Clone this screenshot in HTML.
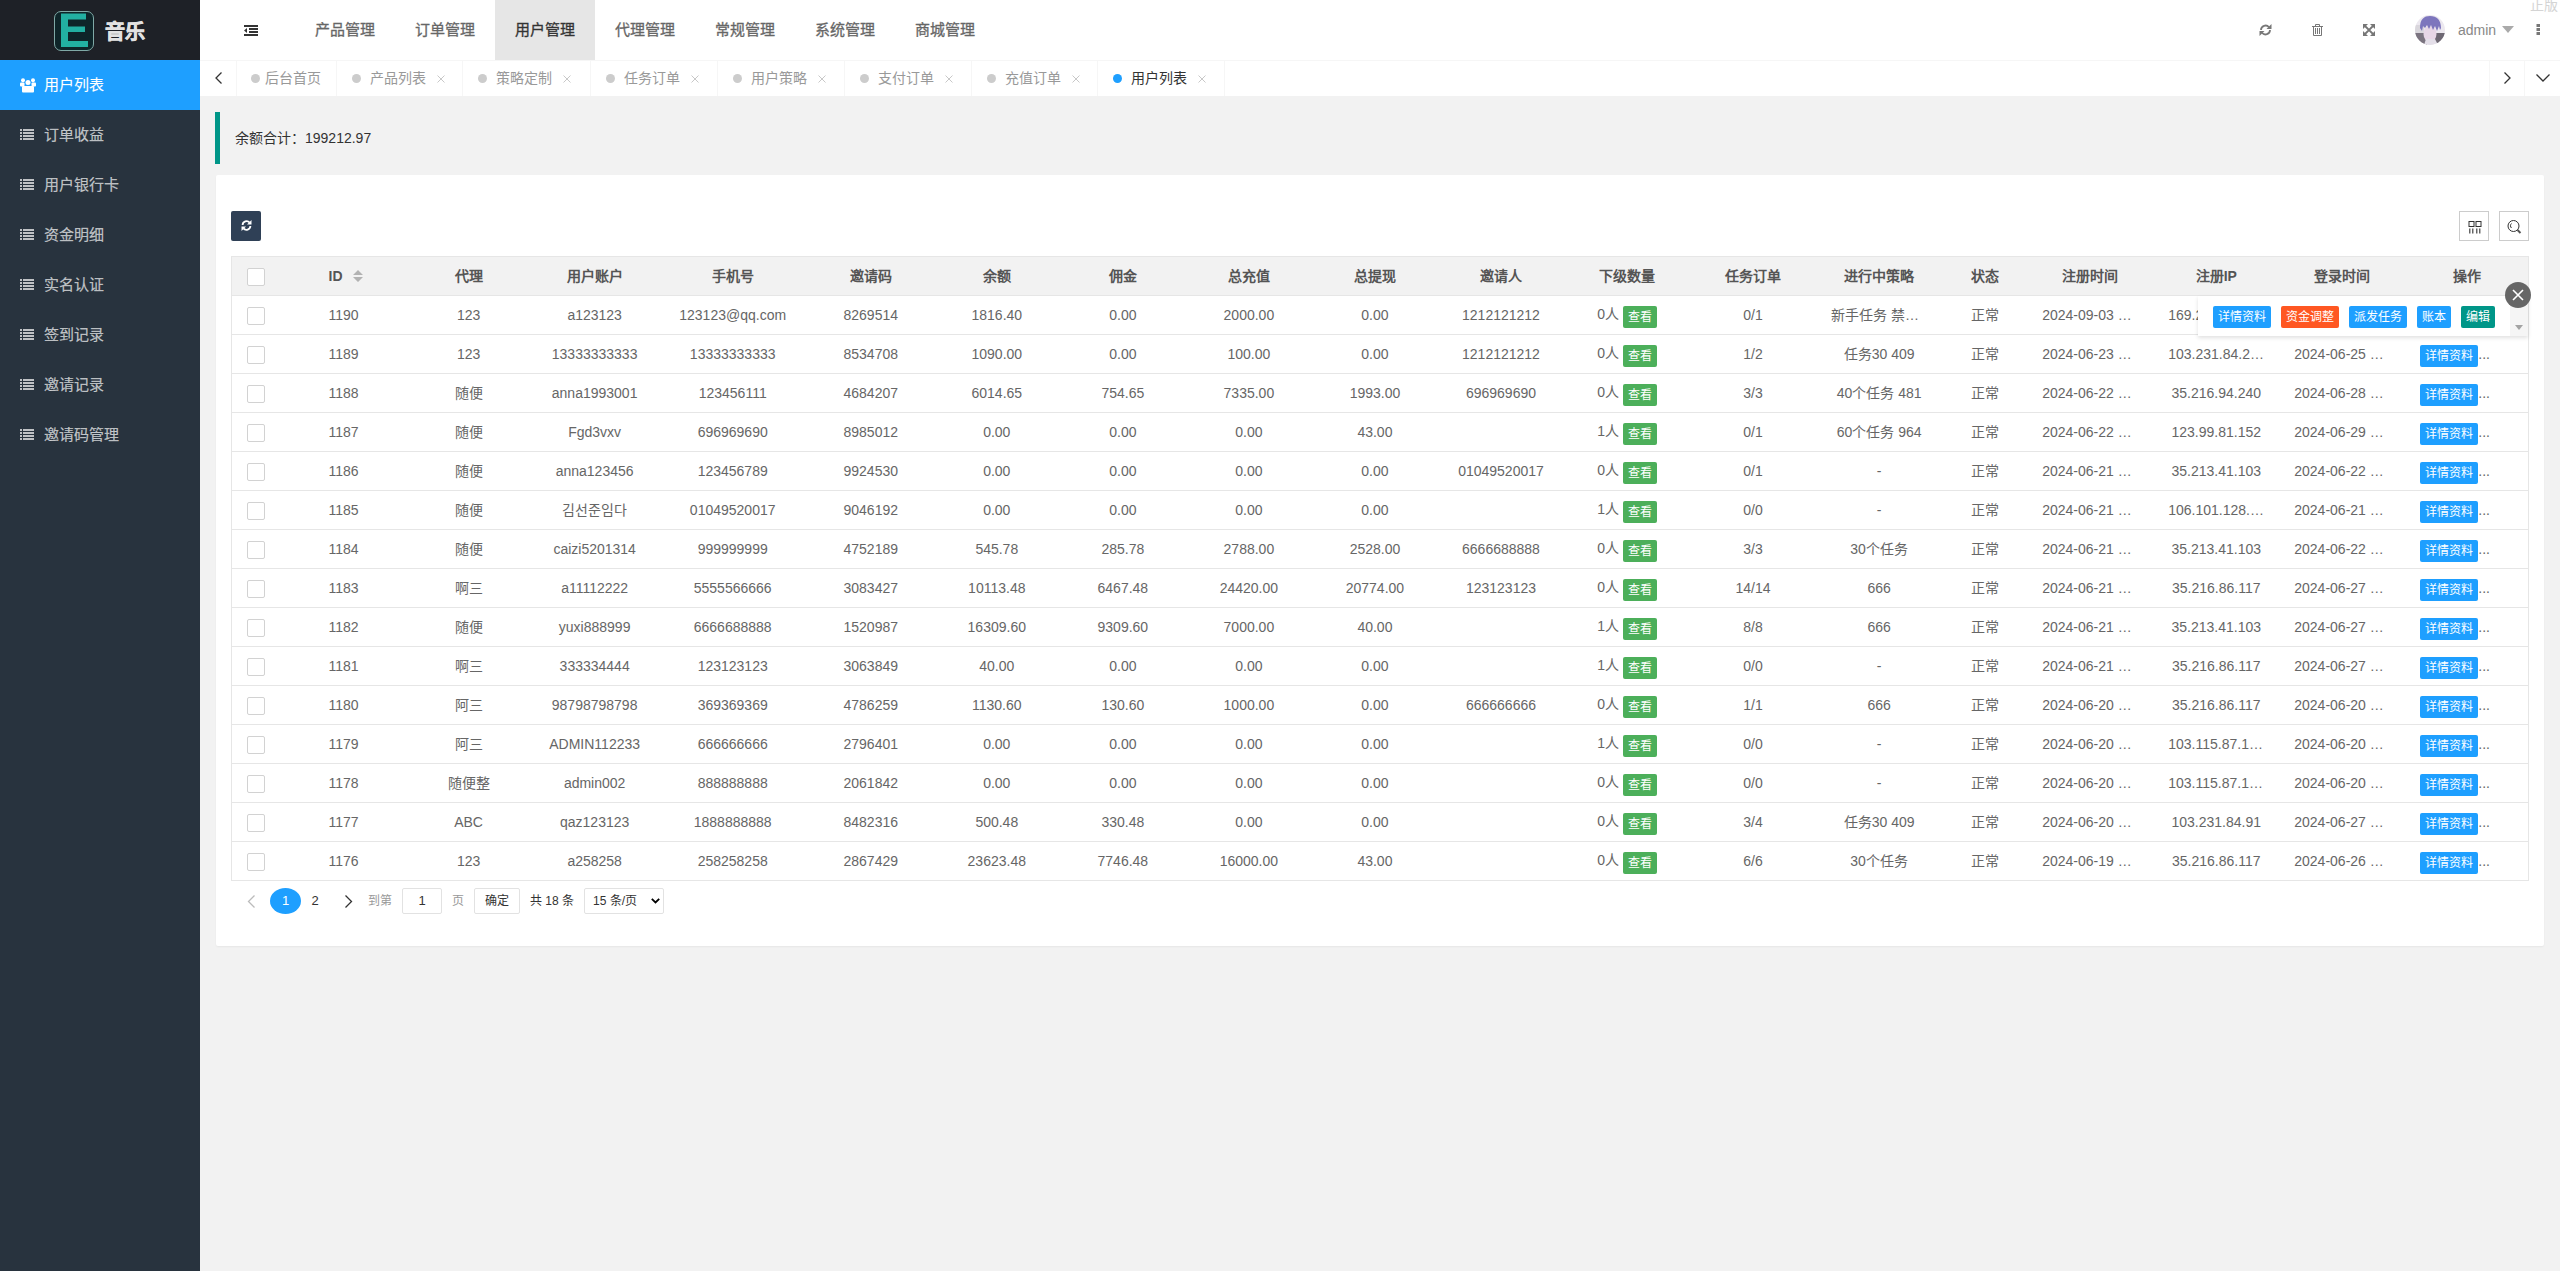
<!DOCTYPE html><html lang="zh-CN"><head><meta charset="utf-8"><title>用户列表</title><style>
*{box-sizing:border-box;margin:0;padding:0}
html,body{width:2560px;height:1271px;overflow:hidden;background:#f2f2f2;font-family:"Liberation Sans",sans-serif;font-size:14px;color:#666}
.abs{position:absolute}
#side{position:absolute;left:0;top:0;width:200px;height:1271px;background:#28333e}
#logo{position:absolute;left:0;top:0;width:200px;height:60px;background:#1e2127}
#logo .box{position:absolute;left:54px;top:11px;width:40px;height:40px;border:1px solid #7fa9a6;border-radius:7px;background:#0e2529}
#logo .t{position:absolute;left:105px;top:19px;font-size:20px;font-weight:bold;color:#e2e2e2;line-height:26px;letter-spacing:0px;-webkit-text-stroke:0.6px #e2e2e2}
.si{position:absolute;left:0;width:200px;height:50px;color:rgba(255,255,255,.7);font-size:15px;line-height:50px}
.si .tx{-webkit-text-stroke:0.2px rgba(255,255,255,.5)}
.si .tx{position:absolute;left:44px;top:0}
.si.on{background:#1e9fff;color:#fff}
.si svg{position:absolute;left:20px;top:19px}
.si.on svg{top:18px}
#hdr{position:absolute;left:200px;top:0;width:2360px;height:61px;background:#fff;border-bottom:1px solid #f6f6f6}
.nav{position:absolute;top:0;width:100px;height:60px;line-height:60px;text-align:center;font-size:15px;color:#666;-webkit-text-stroke:0.3px #666}
.nav.on{-webkit-text-stroke:0.3px #333}
.nav.on{background:#e6e6e6;color:#333}
#tabs{position:absolute;left:200px;top:61px;width:2360px;height:35px;background:#fff}
.tab{position:absolute;top:0;height:35px;border-right:1px solid #f6f6f6;line-height:35px;color:#999;font-size:14px;white-space:nowrap}
.tab .dot{position:absolute;top:13px;width:9px;height:9px;border-radius:50%;background:#ccc}
.tab .tx{position:absolute;top:0}
.tab .x{position:absolute;top:14px;width:8px;height:8px}
.tab.on{color:#333}
.tab.on .dot{background:#1e9fff}
#quote{position:absolute;left:215px;top:112px;width:2330px;height:52px;border-left:5px solid #009688;line-height:52px;padding-left:15px;color:#333;font-size:14px}
#card{position:absolute;left:216px;top:175px;width:2328px;height:771px;background:#fff;border-radius:2px;box-shadow:0 1px 2px 0 rgba(0,0,0,.05)}
#rbtn{position:absolute;left:231px;top:211px;width:30px;height:30px;background:#2f4056;border-radius:2px}
.tool{position:absolute;top:211px;width:30px;height:30px;border:1px solid #ccc;background:#fff}
table.t{position:absolute;left:231px;top:256px;border-collapse:collapse;table-layout:fixed;width:2298px}
table.t td,table.t th{border:1px solid #e6e6e6;border-left:none;border-right:none;height:39px;padding:0 15px;line-height:20px;text-align:center;font-size:14px;white-space:nowrap;overflow:hidden;text-overflow:ellipsis;font-weight:normal}
table.t tr:first-child th{background:#f2f2f2;color:#555;font-weight:bold}
table.t{border-left:1px solid #e6e6e6;border-right:1px solid #e6e6e6}
.cb{display:inline-block;width:18px;height:18px;border:1px solid #d2d2d2;border-radius:2px;background:#fff;vertical-align:middle;position:relative;left:-1px}
.bx{display:inline-block;height:22px;line-height:22px;padding:0 5px;font-size:12px;color:#fff;border-radius:2px;vertical-align:middle}
table.t .bx{vertical-align:top;position:relative;top:2px}
.g{background:#4caf5a}
.b{background:#1e9fff}
.o{background:#ff5722}
.c{background:#009688}
</style></head><body>
<div id="side">
<div id="logo"><div class="box"></div><svg class="abs" style="left:60px;top:13px" width="28" height="35" viewBox="0 0 28 35"><path d="M1 0.5H26V6.5H8V13.5H25V19H8V28H28V34H1Z" fill="#22b0a2"/></svg><div class="t">音乐</div></div>
<div class="si on" style="top:60px"><svg width="16" height="15" viewBox="0 0 16 15"><circle cx="3" cy="2.2" r="2" fill="#fff"/><circle cx="13" cy="2.2" r="2" fill="#fff"/><circle cx="8" cy="4.5" r="2.5" fill="#fff"/><rect x="0" y="4.5" width="4.5" height="4" rx="1" fill="#fff"/><rect x="11.5" y="4.5" width="4.5" height="4" rx="1" fill="#fff"/><rect x="2" y="8" width="12" height="6.5" rx="1" fill="#fff"/></svg><span class="tx">用户列表</span></div>
<div class="si" style="top:110px"><svg width="15" height="12" viewBox="0 0 15 12"><g fill="currentColor"><rect x="0" y="0" width="2" height="2"/><rect x="3" y="0" width="11" height="2"/><rect x="0" y="3" width="2" height="2"/><rect x="3" y="3" width="11" height="2"/><rect x="0" y="6" width="2" height="2"/><rect x="3" y="6" width="11" height="2"/><rect x="0" y="9" width="2" height="2"/><rect x="3" y="9" width="11" height="2"/></g></svg><span class="tx">订单收益</span></div>
<div class="si" style="top:160px"><svg width="15" height="12" viewBox="0 0 15 12"><g fill="currentColor"><rect x="0" y="0" width="2" height="2"/><rect x="3" y="0" width="11" height="2"/><rect x="0" y="3" width="2" height="2"/><rect x="3" y="3" width="11" height="2"/><rect x="0" y="6" width="2" height="2"/><rect x="3" y="6" width="11" height="2"/><rect x="0" y="9" width="2" height="2"/><rect x="3" y="9" width="11" height="2"/></g></svg><span class="tx">用户银行卡</span></div>
<div class="si" style="top:210px"><svg width="15" height="12" viewBox="0 0 15 12"><g fill="currentColor"><rect x="0" y="0" width="2" height="2"/><rect x="3" y="0" width="11" height="2"/><rect x="0" y="3" width="2" height="2"/><rect x="3" y="3" width="11" height="2"/><rect x="0" y="6" width="2" height="2"/><rect x="3" y="6" width="11" height="2"/><rect x="0" y="9" width="2" height="2"/><rect x="3" y="9" width="11" height="2"/></g></svg><span class="tx">资金明细</span></div>
<div class="si" style="top:260px"><svg width="15" height="12" viewBox="0 0 15 12"><g fill="currentColor"><rect x="0" y="0" width="2" height="2"/><rect x="3" y="0" width="11" height="2"/><rect x="0" y="3" width="2" height="2"/><rect x="3" y="3" width="11" height="2"/><rect x="0" y="6" width="2" height="2"/><rect x="3" y="6" width="11" height="2"/><rect x="0" y="9" width="2" height="2"/><rect x="3" y="9" width="11" height="2"/></g></svg><span class="tx">实名认证</span></div>
<div class="si" style="top:310px"><svg width="15" height="12" viewBox="0 0 15 12"><g fill="currentColor"><rect x="0" y="0" width="2" height="2"/><rect x="3" y="0" width="11" height="2"/><rect x="0" y="3" width="2" height="2"/><rect x="3" y="3" width="11" height="2"/><rect x="0" y="6" width="2" height="2"/><rect x="3" y="6" width="11" height="2"/><rect x="0" y="9" width="2" height="2"/><rect x="3" y="9" width="11" height="2"/></g></svg><span class="tx">签到记录</span></div>
<div class="si" style="top:360px"><svg width="15" height="12" viewBox="0 0 15 12"><g fill="currentColor"><rect x="0" y="0" width="2" height="2"/><rect x="3" y="0" width="11" height="2"/><rect x="0" y="3" width="2" height="2"/><rect x="3" y="3" width="11" height="2"/><rect x="0" y="6" width="2" height="2"/><rect x="3" y="6" width="11" height="2"/><rect x="0" y="9" width="2" height="2"/><rect x="3" y="9" width="11" height="2"/></g></svg><span class="tx">邀请记录</span></div>
<div class="si" style="top:410px"><svg width="15" height="12" viewBox="0 0 15 12"><g fill="currentColor"><rect x="0" y="0" width="2" height="2"/><rect x="3" y="0" width="11" height="2"/><rect x="0" y="3" width="2" height="2"/><rect x="3" y="3" width="11" height="2"/><rect x="0" y="6" width="2" height="2"/><rect x="3" y="6" width="11" height="2"/><rect x="0" y="9" width="2" height="2"/><rect x="3" y="9" width="11" height="2"/></g></svg><span class="tx">邀请码管理</span></div>
</div>
<div id="hdr">
<svg class="abs" style="left:44px;top:25px" width="14" height="11" viewBox="0 0 14 11"><g fill="#333"><rect x="0" y="0" width="14" height="2"/><rect x="5" y="3" width="9" height="2"/><rect x="5" y="6" width="9" height="2"/><rect x="0" y="9" width="14" height="2"/><path d="M0 5.5L3 3V8Z"/></g></svg>
<div class="nav" style="left:95px">产品管理</div>
<div class="nav" style="left:195px">订单管理</div>
<div class="nav on" style="left:295px">用户管理</div>
<div class="nav" style="left:395px">代理管理</div>
<div class="nav" style="left:495px">常规管理</div>
<div class="nav" style="left:595px">系统管理</div>
<div class="nav" style="left:695px">商城管理</div>
<svg class="abs" style="left:2059px;top:24px" width="13" height="12" viewBox="0 0 13 12"><g fill="none" stroke="#777" stroke-width="1.8"><path d="M2 6A4.5 4.5 0 0 1 10 3.2"/><path d="M11 6A4.5 4.5 0 0 1 3 8.8"/></g><path d="M12.5 0V5H7.5Z" fill="#777"/><path d="M0.5 12V7H5.5Z" fill="#777"/></svg>
<svg class="abs" style="left:2112px;top:24px" width="11" height="12" viewBox="0 0 11 12"><g fill="none" stroke="#777" stroke-width="1"><path d="M0 2.5H11"/><path d="M3.5 2.5V0.5H7.5V2.5"/><path d="M1.5 2.5V11.5H9.5V2.5"/><path d="M3.5 4V10M5.5 4V10M7.5 4V10"/></g></svg>
<svg class="abs" style="left:2163px;top:24px" width="12" height="12" viewBox="0 0 12 12"><g fill="#777"><path d="M0 0H5L0 5Z"/><path d="M12 0H7L12 5Z"/><path d="M0 12H5L0 7Z"/><path d="M12 12H7L12 7Z"/></g><g stroke="#777" stroke-width="1.8"><path d="M1.5 1.5L10.5 10.5M10.5 1.5L1.5 10.5"/></g></svg>
<svg class="abs" style="left:2215px;top:15px" width="30" height="30" viewBox="0 0 30 30"><defs><clipPath id="av"><circle cx="15" cy="15" r="15"/></clipPath></defs><g clip-path="url(#av)"><rect width="30" height="30" fill="#ece8ef"/><rect x="0" y="10" width="9" height="8" fill="#d9d6dc"/><path d="M0 18H11L12 30H0Z" fill="#7b7480"/><path d="M19 18H30V30H26L25 28H19Z" fill="#6e6873"/><ellipse cx="15" cy="19" rx="6.5" ry="8" fill="#e7d6e6"/><path d="M5 13C5 4 9 1 15 1C22 1 26 5 26 13L25 15L24 11L22 16L20 11L18 15L16 10L14 14L12 10L10 13L8 11L7 16Z" fill="#7d76bd"/><path d="M9 30L11 24H20L23 30Z" fill="#e4dfe9"/></g></svg>
<div class="abs" style="left:2258px;top:0;height:60px;line-height:60px;font-size:14px;color:#888">admin</div>
<svg class="abs" style="left:2302px;top:26px" width="12" height="7" viewBox="0 0 12 7"><path d="M0 0H12L6 7Z" fill="#aaa"/></svg>
<svg class="abs" style="left:2336px;top:24px" width="5" height="11" viewBox="0 0 5 11"><g fill="#777"><rect x="0.5" y="0" width="3.5" height="3"/><rect x="0.5" y="4" width="3.5" height="3"/><rect x="0.5" y="8" width="3.5" height="3"/></g></svg>
<div class="abs" style="left:2330px;top:-4px;font-size:14px;color:#d4d4d4;line-height:18px">正版</div>
</div>
<div id="tabs">
<div class="tab" style="left:0;width:37px"><svg class="abs" style="left:15px;top:11px" width="7" height="12" viewBox="0 0 7 12"><path d="M6.5 0.5L1 6L6.5 11.5" fill="none" stroke="#333" stroke-width="1.3"/></svg></div>
<div class="tab" style="left:37px;width:100px"><span class="dot" style="left:14px"></span><span class="tx" style="left:28px">后台首页</span></div>
<div class="tab" style="left:137px;width:126px"><span class="dot" style="left:15px"></span><span class="tx" style="left:33px">产品列表</span><svg class="x" style="left:100px" viewBox="0 0 8 8"><path d="M0.5 0.5L7.5 7.5M7.5 0.5L0.5 7.5" stroke="#c8c8c8" stroke-width="1"/></svg></div>
<div class="tab" style="left:263px;width:128px"><span class="dot" style="left:15px"></span><span class="tx" style="left:33px">策略定制</span><svg class="x" style="left:100px" viewBox="0 0 8 8"><path d="M0.5 0.5L7.5 7.5M7.5 0.5L0.5 7.5" stroke="#c8c8c8" stroke-width="1"/></svg></div>
<div class="tab" style="left:391px;width:127px"><span class="dot" style="left:15px"></span><span class="tx" style="left:33px">任务订单</span><svg class="x" style="left:100px" viewBox="0 0 8 8"><path d="M0.5 0.5L7.5 7.5M7.5 0.5L0.5 7.5" stroke="#c8c8c8" stroke-width="1"/></svg></div>
<div class="tab" style="left:518px;width:127px"><span class="dot" style="left:15px"></span><span class="tx" style="left:33px">用户策略</span><svg class="x" style="left:100px" viewBox="0 0 8 8"><path d="M0.5 0.5L7.5 7.5M7.5 0.5L0.5 7.5" stroke="#c8c8c8" stroke-width="1"/></svg></div>
<div class="tab" style="left:645px;width:127px"><span class="dot" style="left:15px"></span><span class="tx" style="left:33px">支付订单</span><svg class="x" style="left:100px" viewBox="0 0 8 8"><path d="M0.5 0.5L7.5 7.5M7.5 0.5L0.5 7.5" stroke="#c8c8c8" stroke-width="1"/></svg></div>
<div class="tab" style="left:772px;width:126px"><span class="dot" style="left:15px"></span><span class="tx" style="left:33px">充值订单</span><svg class="x" style="left:100px" viewBox="0 0 8 8"><path d="M0.5 0.5L7.5 7.5M7.5 0.5L0.5 7.5" stroke="#c8c8c8" stroke-width="1"/></svg></div>
<div class="tab on" style="left:898px;width:127px"><span class="dot" style="left:15px"></span><span class="tx" style="left:33px">用户列表</span><svg class="x" style="left:100px" viewBox="0 0 8 8"><path d="M0.5 0.5L7.5 7.5M7.5 0.5L0.5 7.5" stroke="#c8c8c8" stroke-width="1"/></svg></div>
<div class="abs" style="left:2289px;top:0;width:36px;height:35px;border-left:1px solid #f6f6f6"><svg class="abs" style="left:14px;top:11px" width="7" height="12" viewBox="0 0 7 12"><path d="M0.5 0.5L6 6L0.5 11.5" fill="none" stroke="#333" stroke-width="1.3"/></svg></div>
<div class="abs" style="left:2324px;top:0;width:36px;height:35px;border-left:1px solid #f6f6f6"><svg class="abs" style="left:11px;top:13px" width="14" height="8" viewBox="0 0 14 8"><path d="M0.5 0.5L7 7L13.5 0.5" fill="none" stroke="#333" stroke-width="1.3"/></svg></div>
</div>
<div id="quote">余额合计：199212.97</div>
<div id="card"></div>
<div id="rbtn"><svg class="abs" style="left:10px;top:9px" width="11" height="11" viewBox="0 0 11 11"><g fill="none" stroke="#fff" stroke-width="1.8"><path d="M1.6 5A4 4 0 0 1 8.6 2.6"/><path d="M9.4 6A4 4 0 0 1 2.4 8.4"/></g><path d="M10.5 0V4.5H6Z" fill="#fff"/><path d="M0.5 11V6.5H5Z" fill="#fff"/></svg></div>
<div class="tool" style="left:2459px"><svg class="abs" style="left:8px;top:8px" width="14" height="14" viewBox="0 0 14 14"><g fill="none" stroke="#333" stroke-width="1"><rect x="1" y="1.5" width="5" height="5"/><rect x="8" y="1.5" width="5" height="5"/><path d="M1.8 8.5V13.5M4.8 8.5V13.5M8.8 8.5V13.5M11.8 8.5V13.5" stroke-width="1.1"/></g></svg></div>
<div class="tool" style="left:2499px"><svg class="abs" style="left:7px;top:7px" width="16" height="16" viewBox="0 0 16 16"><g fill="none" stroke="#333" stroke-width="1"><circle cx="6.5" cy="7" r="5.5"/><path d="M4.5 4.5A3 3 0 0 0 4.5 9" /></g><path d="M10.5 11L13.5 14" stroke="#555" stroke-width="2"/></svg></div>
<table class="t"><colgroup><col style="width:50px"><col style="width:124px"><col style="width:126px"><col style="width:126px"><col style="width:150px"><col style="width:126px"><col style="width:126px"><col style="width:126px"><col style="width:126px"><col style="width:126px"><col style="width:126px"><col style="width:126px"><col style="width:126px"><col style="width:126px"><col style="width:85px"><col style="width:126px"><col style="width:126px"><col style="width:126px"><col style="width:123px"></colgroup><tr><th><span class="cb"></span></th><th><span style="position:relative;left:2px">ID<svg style="display:inline-block;vertical-align:middle;margin-left:10px;margin-top:-2px" width="10" height="12" viewBox="0 0 10 12"><path d="M0 5L5 0L10 5Z M0 7L5 12L10 7Z" fill="#b2b2b2"/></svg></span></th><th>代理</th><th>用户账户</th><th>手机号</th><th>邀请码</th><th>余额</th><th>佣金</th><th>总充值</th><th>总提现</th><th>邀请人</th><th>下级数量</th><th>任务订单</th><th>进行中策略</th><th>状态</th><th>注册时间</th><th>注册IP</th><th>登录时间</th><th>操作</th></tr><tr><td><span class="cb"></span></td><td>1190</td><td>123</td><td>a123123</td><td>123123@qq.com</td><td>8269514</td><td>1816.40</td><td>0.00</td><td>2000.00</td><td>0.00</td><td>1212121212</td><td>0人<span class="bx g" style="margin-left:4px">查看</span></td><td>0/1</td><td>新手任务 禁用提现</td><td>正常</td><td>2024-09-03 12:30:15</td><td>169.254.10.123</td><td>2024-09-03 12:30:15</td><td style="text-align:left;padding-left:15px"><span class="bx b">详情资料</span><span style="position:relative;top:1px">...</span></td></tr><tr><td><span class="cb"></span></td><td>1189</td><td>123</td><td>13333333333</td><td>13333333333</td><td>8534708</td><td>1090.00</td><td>0.00</td><td>100.00</td><td>0.00</td><td>1212121212</td><td>0人<span class="bx g" style="margin-left:4px">查看</span></td><td>1/2</td><td>任务30 409</td><td>正常</td><td>2024-06-23 10:25:36</td><td>103.231.84.211</td><td>2024-06-25 10:25:36</td><td style="text-align:left;padding-left:15px"><span class="bx b">详情资料</span><span style="position:relative;top:1px">...</span></td></tr><tr><td><span class="cb"></span></td><td>1188</td><td>随便</td><td>anna1993001</td><td>123456111</td><td>4684207</td><td>6014.65</td><td>754.65</td><td>7335.00</td><td>1993.00</td><td>696969690</td><td>0人<span class="bx g" style="margin-left:4px">查看</span></td><td>3/3</td><td>40个任务 481</td><td>正常</td><td>2024-06-22 10:25:36</td><td>35.216.94.240</td><td>2024-06-28 10:25:36</td><td style="text-align:left;padding-left:15px"><span class="bx b">详情资料</span><span style="position:relative;top:1px">...</span></td></tr><tr><td><span class="cb"></span></td><td>1187</td><td>随便</td><td>Fgd3vxv</td><td>696969690</td><td>8985012</td><td>0.00</td><td>0.00</td><td>0.00</td><td>43.00</td><td></td><td>1人<span class="bx g" style="margin-left:4px">查看</span></td><td>0/1</td><td>60个任务 964</td><td>正常</td><td>2024-06-22 10:25:36</td><td>123.99.81.152</td><td>2024-06-29 10:25:36</td><td style="text-align:left;padding-left:15px"><span class="bx b">详情资料</span><span style="position:relative;top:1px">...</span></td></tr><tr><td><span class="cb"></span></td><td>1186</td><td>随便</td><td>anna123456</td><td>123456789</td><td>9924530</td><td>0.00</td><td>0.00</td><td>0.00</td><td>0.00</td><td>01049520017</td><td>0人<span class="bx g" style="margin-left:4px">查看</span></td><td>0/1</td><td>-</td><td>正常</td><td>2024-06-21 10:25:36</td><td>35.213.41.103</td><td>2024-06-22 10:25:36</td><td style="text-align:left;padding-left:15px"><span class="bx b">详情资料</span><span style="position:relative;top:1px">...</span></td></tr><tr><td><span class="cb"></span></td><td>1185</td><td>随便</td><td>김선준임다</td><td>01049520017</td><td>9046192</td><td>0.00</td><td>0.00</td><td>0.00</td><td>0.00</td><td></td><td>1人<span class="bx g" style="margin-left:4px">查看</span></td><td>0/0</td><td>-</td><td>正常</td><td>2024-06-21 10:25:36</td><td>106.101.128.155</td><td>2024-06-21 10:25:36</td><td style="text-align:left;padding-left:15px"><span class="bx b">详情资料</span><span style="position:relative;top:1px">...</span></td></tr><tr><td><span class="cb"></span></td><td>1184</td><td>随便</td><td>caizi5201314</td><td>999999999</td><td>4752189</td><td>545.78</td><td>285.78</td><td>2788.00</td><td>2528.00</td><td>6666688888</td><td>0人<span class="bx g" style="margin-left:4px">查看</span></td><td>3/3</td><td>30个任务</td><td>正常</td><td>2024-06-21 10:25:36</td><td>35.213.41.103</td><td>2024-06-22 10:25:36</td><td style="text-align:left;padding-left:15px"><span class="bx b">详情资料</span><span style="position:relative;top:1px">...</span></td></tr><tr><td><span class="cb"></span></td><td>1183</td><td>啊三</td><td>a11112222</td><td>5555566666</td><td>3083427</td><td>10113.48</td><td>6467.48</td><td>24420.00</td><td>20774.00</td><td>123123123</td><td>0人<span class="bx g" style="margin-left:4px">查看</span></td><td>14/14</td><td>666</td><td>正常</td><td>2024-06-21 10:25:36</td><td>35.216.86.117</td><td>2024-06-27 10:25:36</td><td style="text-align:left;padding-left:15px"><span class="bx b">详情资料</span><span style="position:relative;top:1px">...</span></td></tr><tr><td><span class="cb"></span></td><td>1182</td><td>随便</td><td>yuxi888999</td><td>6666688888</td><td>1520987</td><td>16309.60</td><td>9309.60</td><td>7000.00</td><td>40.00</td><td></td><td>1人<span class="bx g" style="margin-left:4px">查看</span></td><td>8/8</td><td>666</td><td>正常</td><td>2024-06-21 10:25:36</td><td>35.213.41.103</td><td>2024-06-27 10:25:36</td><td style="text-align:left;padding-left:15px"><span class="bx b">详情资料</span><span style="position:relative;top:1px">...</span></td></tr><tr><td><span class="cb"></span></td><td>1181</td><td>啊三</td><td>333334444</td><td>123123123</td><td>3063849</td><td>40.00</td><td>0.00</td><td>0.00</td><td>0.00</td><td></td><td>1人<span class="bx g" style="margin-left:4px">查看</span></td><td>0/0</td><td>-</td><td>正常</td><td>2024-06-21 10:25:36</td><td>35.216.86.117</td><td>2024-06-27 10:25:36</td><td style="text-align:left;padding-left:15px"><span class="bx b">详情资料</span><span style="position:relative;top:1px">...</span></td></tr><tr><td><span class="cb"></span></td><td>1180</td><td>阿三</td><td>98798798798</td><td>369369369</td><td>4786259</td><td>1130.60</td><td>130.60</td><td>1000.00</td><td>0.00</td><td>666666666</td><td>0人<span class="bx g" style="margin-left:4px">查看</span></td><td>1/1</td><td>666</td><td>正常</td><td>2024-06-20 10:25:36</td><td>35.216.86.117</td><td>2024-06-20 10:25:36</td><td style="text-align:left;padding-left:15px"><span class="bx b">详情资料</span><span style="position:relative;top:1px">...</span></td></tr><tr><td><span class="cb"></span></td><td>1179</td><td>阿三</td><td>ADMIN112233</td><td>666666666</td><td>2796401</td><td>0.00</td><td>0.00</td><td>0.00</td><td>0.00</td><td></td><td>1人<span class="bx g" style="margin-left:4px">查看</span></td><td>0/0</td><td>-</td><td>正常</td><td>2024-06-20 10:25:36</td><td>103.115.87.172</td><td>2024-06-20 10:25:36</td><td style="text-align:left;padding-left:15px"><span class="bx b">详情资料</span><span style="position:relative;top:1px">...</span></td></tr><tr><td><span class="cb"></span></td><td>1178</td><td>随便整</td><td>admin002</td><td>888888888</td><td>2061842</td><td>0.00</td><td>0.00</td><td>0.00</td><td>0.00</td><td></td><td>0人<span class="bx g" style="margin-left:4px">查看</span></td><td>0/0</td><td>-</td><td>正常</td><td>2024-06-20 10:25:36</td><td>103.115.87.172</td><td>2024-06-20 10:25:36</td><td style="text-align:left;padding-left:15px"><span class="bx b">详情资料</span><span style="position:relative;top:1px">...</span></td></tr><tr><td><span class="cb"></span></td><td>1177</td><td>ABC</td><td>qaz123123</td><td>1888888888</td><td>8482316</td><td>500.48</td><td>330.48</td><td>0.00</td><td>0.00</td><td></td><td>0人<span class="bx g" style="margin-left:4px">查看</span></td><td>3/4</td><td>任务30 409</td><td>正常</td><td>2024-06-20 10:25:36</td><td>103.231.84.91</td><td>2024-06-27 10:25:36</td><td style="text-align:left;padding-left:15px"><span class="bx b">详情资料</span><span style="position:relative;top:1px">...</span></td></tr><tr><td><span class="cb"></span></td><td>1176</td><td>123</td><td>a258258</td><td>258258258</td><td>2867429</td><td>23623.48</td><td>7746.48</td><td>16000.00</td><td>43.00</td><td></td><td>0人<span class="bx g" style="margin-left:4px">查看</span></td><td>6/6</td><td>30个任务</td><td>正常</td><td>2024-06-19 10:25:36</td><td>35.216.86.117</td><td>2024-06-26 10:25:36</td><td style="text-align:left;padding-left:15px"><span class="bx b">详情资料</span><span style="position:relative;top:1px">...</span></td></tr></table>
<div class="abs" style="left:2198px;top:296px;width:330px;height:40px;background:#fff;box-shadow:0 2px 4px rgba(0,0,0,.12)"><span class="abs bx b" style="left:15px;top:10px">详情资料</span><span class="abs bx o" style="left:83px;top:10px">资金调整</span><span class="abs bx b" style="left:151px;top:10px">派发任务</span><span class="abs bx b" style="left:219px;top:10px">账本</span><span class="abs bx c" style="left:263px;top:10px">编辑</span><div class="abs" style="left:312px;top:0;width:18px;height:40px;background:#f5f5f5"><svg class="abs" style="left:5px;top:29px" width="8" height="5" viewBox="0 0 8 5"><path d="M0 0H8L4 5Z" fill="#a3a3a3"/></svg></div></div>
<div class="abs" style="left:2505px;top:282px;width:26px;height:26px;border-radius:50%;background:#666"><svg class="abs" style="left:7px;top:7px" width="12" height="12" viewBox="0 0 12 12"><path d="M1 1L11 11M11 1L1 11" stroke="#fff" stroke-width="1.6"/></svg></div>
<svg class="abs" style="left:247px;top:895px" width="8" height="13" viewBox="0 0 8 13"><path d="M7.5 0.5L1.5 6.5L7.5 12.5" fill="none" stroke="#bbb" stroke-width="1.3"/></svg>
<div class="abs" style="left:270px;top:888px;width:31px;height:26px;border-radius:50%;background:#1e9fff;color:#fff;text-align:center;line-height:26px;font-size:13px">1</div>
<div class="abs" style="left:301px;top:888px;width:28px;height:26px;color:#333;text-align:center;line-height:26px;font-size:13px">2</div>
<svg class="abs" style="left:345px;top:895px" width="8" height="13" viewBox="0 0 8 13"><path d="M0.5 0.5L6.5 6.5L0.5 12.5" fill="none" stroke="#333" stroke-width="1.3"/></svg>
<div class="abs" style="left:368px;top:888px;line-height:26px;font-size:12px;color:#999">到第</div>
<div class="abs" style="left:402px;top:888px;width:40px;height:26px;border:1px solid #e2e2e2;border-radius:2px;line-height:24px;text-align:center;font-size:13px;color:#333">1</div>
<div class="abs" style="left:452px;top:888px;line-height:26px;font-size:12px;color:#999">页</div>
<div class="abs" style="left:474px;top:888px;width:46px;height:26px;border:1px solid #e2e2e2;border-radius:2px;line-height:24px;text-align:center;font-size:12px;color:#333">确定</div>
<div class="abs" style="left:530px;top:888px;line-height:26px;font-size:12px;color:#333">共 18 条</div>
<div class="abs" style="left:584px;top:888px;width:80px;height:26px;border:1px solid #e2e2e2;border-radius:2px;line-height:24px;padding-left:8px;font-size:12px;color:#333">15 条/页<svg class="abs" style="left:66px;top:9px" width="9" height="6" viewBox="0 0 9 6"><path d="M0.8 0.8L4.5 4.5L8.2 0.8" fill="none" stroke="#000" stroke-width="1.8"/></svg></div>
</body></html>
